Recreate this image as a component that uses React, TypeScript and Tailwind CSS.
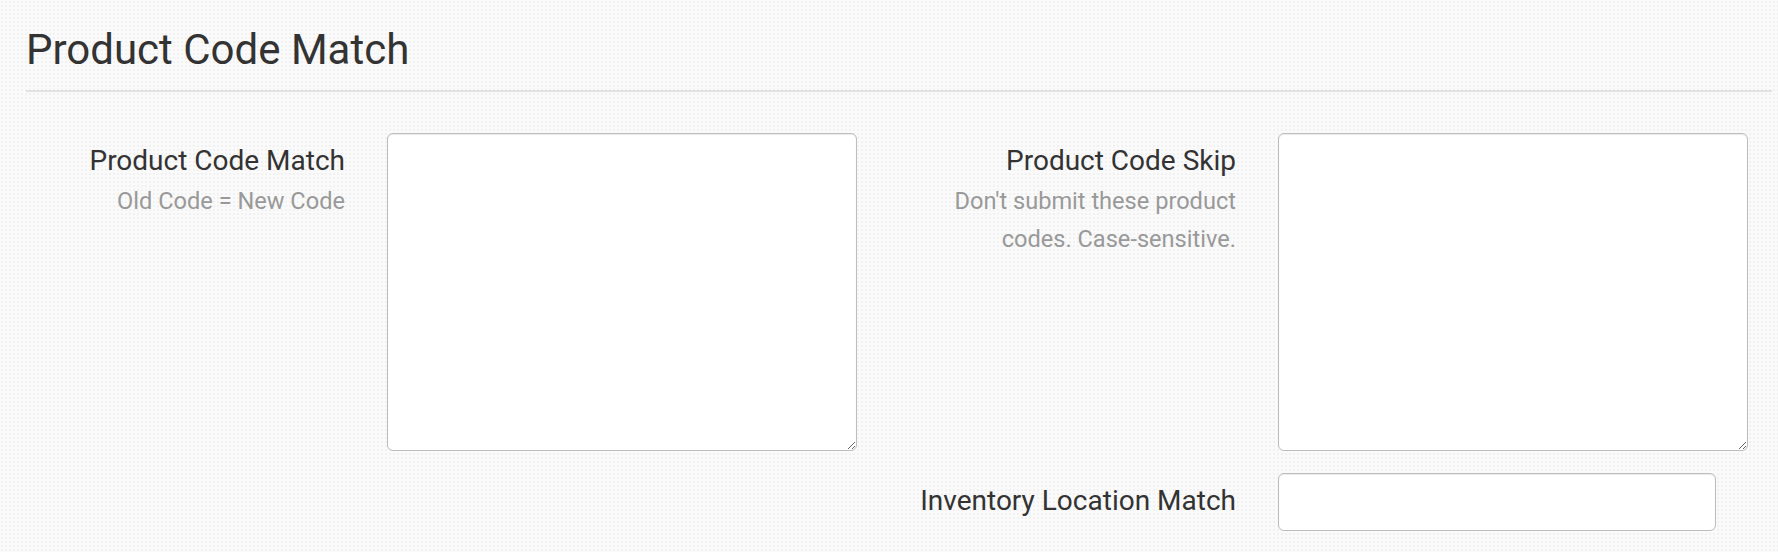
import React from "react";

function FieldRow({
  label,
  help,
  children,
}: {
  label: string;
  help?: string;
  children: React.ReactNode;
}) {
  return (
    <div className="flex items-start gap-[42px]">
      <div className="w-[319px] shrink-0 pt-[9px] text-right">
        <div className="text-[28px] leading-[38px] text-[#333]">{label}</div>
        {help && (
          <div className="mt-[2px] text-[23.6px] leading-[38px] text-[#999]">{help}</div>
        )}
      </div>
      {children}
    </div>
  );
}

const boxCls =
  "block rounded-[6px] border-[1.5px] border-[#bdbdbd] bg-white shadow-[inset_0_1px_1px_rgba(0,0,0,0.08)] outline-none";

export default function App() {
  return (
    <div
      className="h-[552px] w-full overflow-hidden bg-[#fafafa] bg-[radial-gradient(circle,#f1f1f1_1px,transparent_1.2px)] bg-[length:4px_4px] pl-[26px] pr-[6px] pt-[27px]"
      style={{ fontFamily: "Roboto, 'Noto Sans', sans-serif" }}
    >
      <h2 className="text-[42px] leading-[45px] font-normal text-[#333]">Product Code Match</h2>
      <div className="mt-[18px] h-[2px] bg-[#e2e2e2]" />

      <div className="mt-[41px] flex">
        <div className="w-[891px] shrink-0">
          <FieldRow label="Product Code Match" help="Old Code = New Code">
            <textarea className={`${boxCls} h-[318px] w-[470px]`} />
          </FieldRow>
        </div>
        <div className="flex w-[891px] shrink-0 flex-col gap-[22px]">
          <FieldRow label="Product Code Skip" help="Don't submit these product codes. Case-sensitive.">
            <textarea className={`${boxCls} h-[318px] w-[470px]`} />
          </FieldRow>
          <FieldRow label="Inventory Location Match">
            <input type="text" className={`${boxCls} h-[58px] w-[438px]`} />
          </FieldRow>
        </div>
      </div>
    </div>
  );
}
